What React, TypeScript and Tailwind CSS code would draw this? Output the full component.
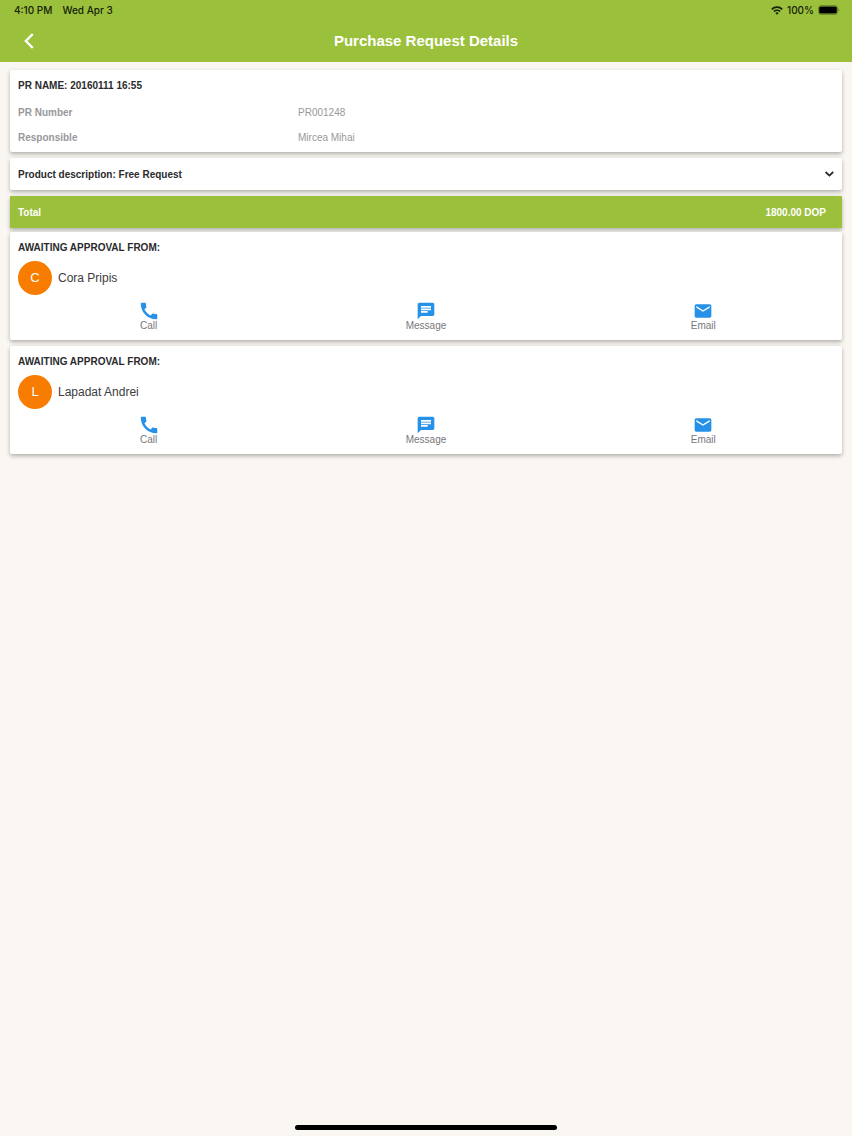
import type { ReactNode } from 'react';
import { MdCall, MdChat, MdEmail } from 'react-icons/md';

interface Approver {
  name: string;
  phone: string;
  email: string;
}

const approvers: Approver[] = [
  { name: 'Cora Pripis', phone: '+40700000001', email: 'cora.pripis@example.com' },
  { name: 'Lapadat Andrei', phone: '+40700000002', email: 'lapadat.andrei@example.com' },
];

const details = [
  { label: 'PR Number', value: 'PR001248' },
  { label: 'Responsible', value: 'Mircea Mihai' },
];

function StatusBar() {
  return (
    <div className="flex h-5 items-center justify-between pr-3 pl-3.5 font-['Inter',sans-serif] text-[10px] leading-5 font-medium text-[#16200a]">
      <div className="flex gap-2.5">
        <span>4:10 PM</span>
        <span>Wed Apr 3</span>
      </div>
      <div className="flex items-center gap-1">
        <svg viewBox="0 0 24 18" className="h-[9px] w-3" fill="none" stroke="currentColor" strokeWidth="3.4">
          <path d="M1.5 6.6a15 15 0 0 1 21 0" />
          <path d="M5.8 11a9 9 0 0 1 12.4 0" />
          <path d="M12 17.5 8.6 14a5 5 0 0 1 6.8 0z" fill="currentColor" stroke="none" />
        </svg>
        <span>100%</span>
        <svg viewBox="0 0 44 20" className="h-[10px] w-[22px]">
          <rect x="1" y="1" width="38" height="18" rx="5" fill="none" stroke="currentColor" strokeOpacity="0.4" strokeWidth="1.6" />
          <rect x="2.4" y="2.8" width="35.200" height="14.400" rx="3" fill="#000" />
          <path d="M41 7c2 .8 2 5.200 0 6z" fill="currentColor" fillOpacity="0.6" />
        </svg>
      </div>
    </div>
  );
}

function Card({ children }: { children: ReactNode }) {
  return <section className="rounded-xs bg-white px-2 shadow-[0_2px_4px_rgba(0,0,0,0.3)]">{children}</section>;
}

function Action({ href, label, children }: { href: string; label: string; children: ReactNode }) {
  return (
    <a href={href} className="flex flex-1 flex-col items-center text-[10px] leading-3 text-[#77777c]">
      <span className="flex h-[19px] items-center text-[#2691e8]">{children}</span>
      {label}
    </a>
  );
}

function ApproverCard({ approver }: { approver: Approver }) {
  return (
    <Card>
      <div className="pt-1.5 pb-2">
        <h2 className="text-[10px] leading-5 font-bold">AWAITING APPROVAL FROM:</h2>
        <div className="flex items-center gap-1.5 pt-[3px]">
          <span className="flex size-[34px] items-center justify-center rounded-full bg-[#f77c00] text-[13px] text-white">
            {approver.name[0]}
          </span>
          <span className="text-xs text-[#3c3c3e]">{approver.name}</span>
        </div>
        <div className="-mx-2 flex pt-1.5">
          <Action href={`tel:${approver.phone}`} label="Call">
            <MdCall size={22} />
          </Action>
          <Action href={`sms:${approver.phone}`} label="Message">
            <MdChat size={20} />
          </Action>
          <Action href={`mailto:${approver.email}`} label="Email">
            <MdEmail size={20} />
          </Action>
        </div>
      </div>
    </Card>
  );
}

export default function App() {
  return (
    <div className="flex min-h-screen flex-col bg-[#faf7f2] font-['Liberation_Sans',sans-serif] text-[#2b2b2d]">
      <header className="bg-[#9bc03c]">
        <StatusBar />
        <div className="grid h-[42px] grid-cols-[1fr_auto_1fr] items-center px-5">
          <button aria-label="Back" className="flex w-[18px] items-center justify-center text-white">
            <svg viewBox="0 0 10 16" className="h-4 w-2.5" fill="none" stroke="currentColor" strokeWidth="2.4">
              <path d="M8.800 1 1.900 8l6.900 7" />
            </svg>
          </button>
          <h1 className="text-[15px] leading-5 font-bold text-white">Purchase Request Details</h1>
        </div>
      </header>

      <main className="flex flex-1 flex-col gap-1.5 px-2.5 pt-2">
        <Card>
          <div className="pt-1.5 pb-0.5">
            <h2 className="text-[10px] leading-5 font-bold">PR NAME: 20160111 16:55</h2>
            <dl className="pt-1 text-[10px] text-[#98989b]">
              {details.map((row) => (
                <div key={row.label} className="grid h-[25px] grid-cols-[1fr_2fr] items-center gap-3">
                  <dt className="font-bold">{row.label}</dt>
                  <dd>{row.value}</dd>
                </div>
              ))}
            </dl>
          </div>
        </Card>

        <Card>
          <button className="flex h-8 w-full items-center justify-between text-[10px] font-bold">
            Product description: Free Request
            <svg viewBox="0 0 10 6" className="h-1.5 w-2.5" fill="none" stroke="currentColor" strokeWidth="1.8">
              <path d="M1.600 1 5.400 4.600 9.200 1" />
            </svg>
          </button>
        </Card>

        <div className="flex flex-col gap-1">
          <section className="flex h-8 items-center justify-between bg-[#9bc03c] pr-4 pl-2 text-[10px] font-bold text-white shadow-[0_2px_4px_rgba(0,0,0,0.3)]">
            <span>Total</span>
            <span>1800.00 DOP</span>
          </section>
          <ApproverCard approver={approvers[0]} />
        </div>
        <ApproverCard approver={approvers[1]} />
      </main>

      <footer className="flex justify-center pb-1.5">
        <div className="h-[5px] w-[262px] rounded-full bg-black" />
      </footer>
    </div>
  );
}
